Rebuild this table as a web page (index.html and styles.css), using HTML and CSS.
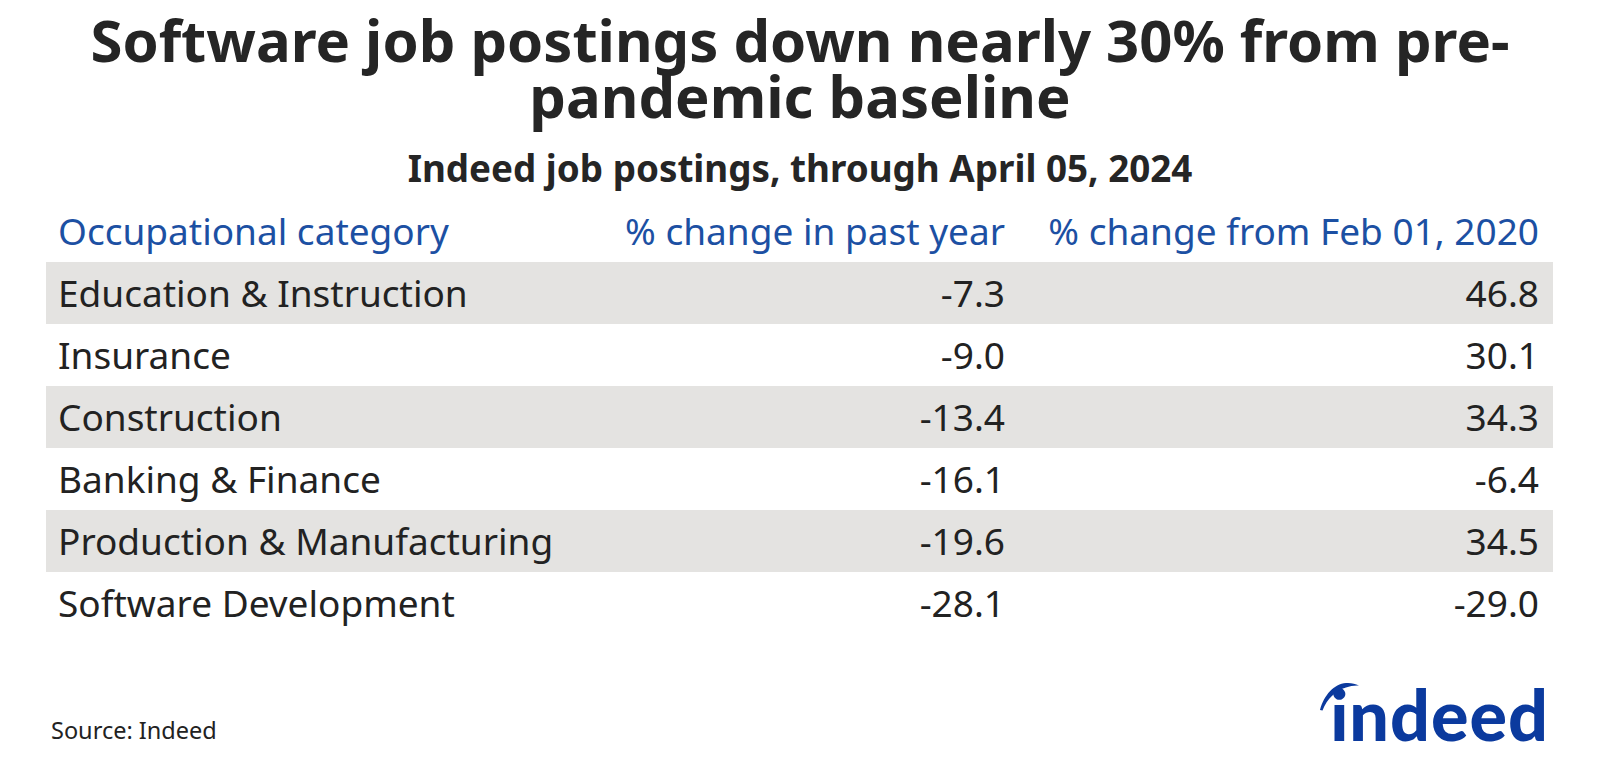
FILE: index.html
```html
<!DOCTYPE html>
<html lang="en">
<head>
<meta charset="utf-8">
<title>Software job postings</title>
<link rel="stylesheet" href="styles.css">
</head>
<body>
<div class="page">
  <h1 class="title">Software job postings down nearly 30% from pre-<br>pandemic baseline</h1>
  <p class="subtitle">Indeed job postings, through April 05, 2024</p>
  <div class="table">
    <div class="row head">
      <div class="cell name">Occupational category</div>
      <div class="cell num">% change in past year</div>
      <div class="cell num">% change from Feb 01, 2020</div>
    </div>
    <div class="row band">
      <div class="cell name">Education &amp; Instruction</div>
      <div class="cell num">-7.3</div>
      <div class="cell num">46.8</div>
    </div>
    <div class="row">
      <div class="cell name">Insurance</div>
      <div class="cell num">-9.0</div>
      <div class="cell num">30.1</div>
    </div>
    <div class="row band">
      <div class="cell name">Construction</div>
      <div class="cell num">-13.4</div>
      <div class="cell num">34.3</div>
    </div>
    <div class="row">
      <div class="cell name">Banking &amp; Finance</div>
      <div class="cell num">-16.1</div>
      <div class="cell num">-6.4</div>
    </div>
    <div class="row band">
      <div class="cell name">Production &amp; Manufacturing</div>
      <div class="cell num">-19.6</div>
      <div class="cell num">34.5</div>
    </div>
    <div class="row">
      <div class="cell name">Software Development</div>
      <div class="cell num">-28.1</div>
      <div class="cell num">-29.0</div>
    </div>
  </div>
  <div class="footer">
    <div class="source">Source: Indeed</div>
    <div class="logo">
      <svg class="arc" width="44" height="30" viewBox="0 0 44 30" aria-hidden="true">
        <path d="M2 29 C6 14 16 3 28 2 C33 1.7 37 2.5 41 4.5 C36 4.3 32 5 28 6.5 C18 9.5 9 17.5 4.5 29.5 Z" fill="#0b3a9e"/>
      </svg>
      <span class="logo-text">indeed</span>
    </div>
  </div>
</div>
</body>
</html>
```
FILE: styles.css
```css
html, body {
  margin: 0;
  padding: 0;
  background: #ffffff;
}
.page {
  width: 1600px;
  height: 778px;
  box-sizing: border-box;
  padding-top: 12px;
  font-family: "Noto Sans", "Open Sans", sans-serif;
  color: #222222;
  overflow: hidden;
}
.title {
  margin: 0;
  text-align: center;
  font-size: 58px;
  line-height: 56px;
  font-weight: 700;
  color: #252525;
}
.subtitle {
  margin: 22px 0 0 0;
  text-align: center;
  font-size: 36.8px;
  line-height: 44px;
  font-weight: 700;
  color: #252525;
}
.table {
  margin: 10px 47px 0 46px;
}
.row {
  display: grid;
  grid-template-columns: 560px 413px 1fr;
  height: 62px;
  align-items: center;
  font-size: 37px;
  line-height: 62px;
}
.row.head {
  color: #1c50a3;
}
.band {
  background: #e4e3e1;
}
.cell.name {
  padding-left: 12px;
  white-space: nowrap;
}
.cell.num {
  text-align: right;
  padding-right: 14px;
  white-space: nowrap;
}
.footer {
  display: flex;
  justify-content: space-between;
  align-items: flex-end;
  margin: 45px 51px 0 51px;
  height: 70px;
}
.source {
  font-size: 23.5px;
  line-height: 28px;
  margin-bottom: 5px;
  color: #222222;
}
.logo {
  position: relative;
  height: 70px;
}
.logo .arc {
  position: absolute;
  right: 187px;
  top: 2px;
}
.logo-text {
  display: block;
  font-family: "Lato", "Noto Sans", sans-serif;
  font-weight: 900;
  font-size: 70px;
  line-height: 70px;
  color: #0b3a9e;
  letter-spacing: 1px;
}
```
